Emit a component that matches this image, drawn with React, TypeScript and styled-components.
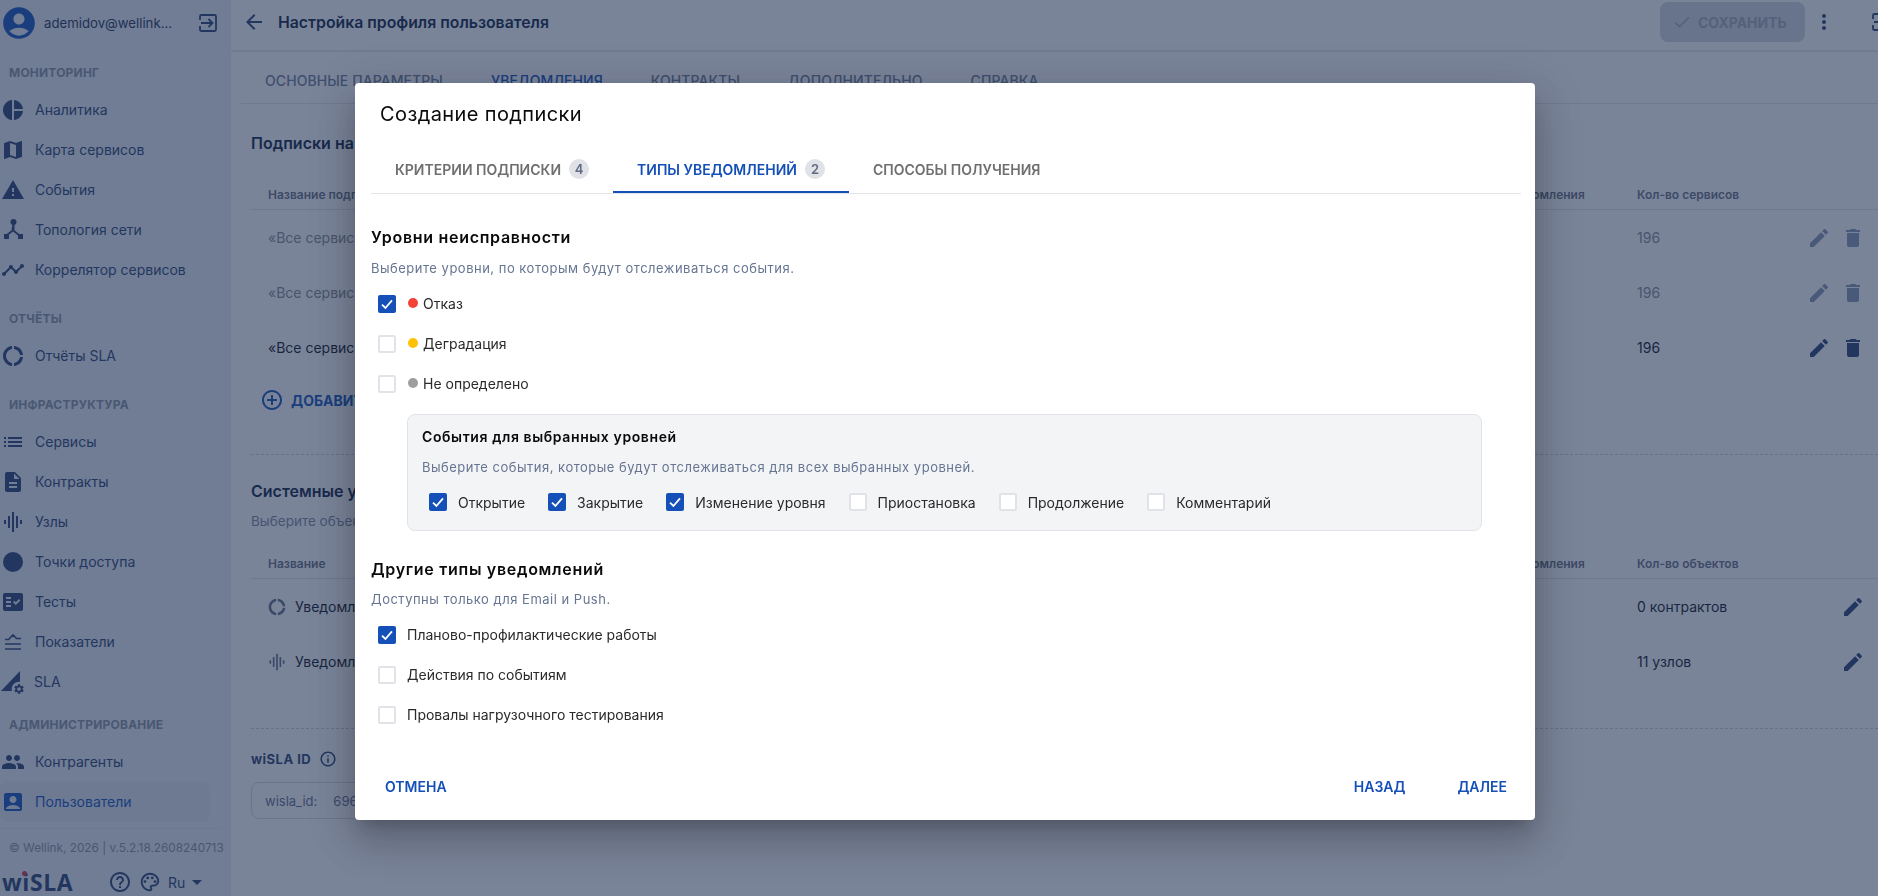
import React from "react";
import styled, { createGlobalStyle } from "styled-components";
import {
  MdAccountBox,
  MdAccountCircle,
  MdAddCircleOutline,
  MdArrowBack,
  MdArrowDropDown,
  MdCheck,
  MdDelete,
  MdDescription,
  MdDonutLarge,
  MdEdit,
  MdFactCheck,
  MdGraphicEq,
  MdHelpOutline,
  MdInfoOutline,
  MdList,
  MdMap,
  MdMoreVert,
  MdOutlinePalette,
  MdPeople,
  MdPieChart,
  MdTimeline,
  MdWarning,
} from "react-icons/md";

const GlobalStyle = createGlobalStyle`
  html, body {
    margin: 0;
    height: 100%;
    overflow: hidden;
    background: #fff;
  }
  * {
    box-sizing: border-box;
  }
  body {
    font-family: "Inter", "Liberation Sans", sans-serif;
    color: #000;
  }
`;

const Page = styled.div`
  display: flex;
  width: 1878px;
  height: 896px;
  overflow: hidden;
`;

const Sidebar = styled.aside`
  flex: none;
  width: 231px;
  height: 100%;
  background: #e9edf3;
  color: #253e6e;
`;

const UserRow = styled.div`
  display: flex;
  align-items: center;
  height: 46px;
  font-size: 13.2px;
`;

const UserName = styled.span`
  margin-left: 6px;
  width: 154px;
  white-space: nowrap;
  color: #1c2f55;
`;

const SectionLabel = styled.div<{ $gap?: number }>`
  height: 20px;
  line-height: 20px;
  margin: ${(p) => p.$gap ?? 19}px 0 7px;
  padding-left: 9px;
  font-size: 12px;
  font-weight: 700;
  letter-spacing: 0.2px;
  color: #878e9d;
`;

const NavItem = styled.div<{ $active?: boolean }>`
  display: flex;
  align-items: center;
  gap: 10px;
  width: 210px;
  height: 40px;
  padding: 0 0 1px 1px;
  font-size: 14px;
  border-radius: 8px;
  color: ${(p) => (p.$active ? "#0f52ba" : "#253e6e")};
  background: ${(p) => (p.$active ? "#dfe5ee" : "transparent")};
`;

const NavDot = styled.span`
  display: block;
  width: 20px;
  height: 20px;
  margin: 0 2px;
  border-radius: 50%;
  background: #253e6e;
`;

const SideDivider = styled.div`
  height: 1px;
  width: 222px;
  margin-top: 6px;
  background: #dfe3ea;
`;

const Copyright = styled.div`
  margin-top: 9px;
  padding-left: 9px;
  font-size: 11.8px;
  line-height: 20px;
  white-space: nowrap;
  color: #878e9d;
`;

const SideFooter = styled.div`
  display: flex;
  align-items: center;
  height: 30px;
  margin-top: 9px;
  padding-left: 2px;
`;

const Logo = styled.span`
  position: relative;
  width: 70px;
  font-family: "Open Sans", sans-serif;
  font-size: 23px;
  font-weight: 700;
  letter-spacing: 0.6px;
  line-height: 30px;
  color: #253e6e;
`;

const LogoDot = styled.i`
  position: absolute;
  left: 20px;
  top: 4px;
  width: 5px;
  height: 5px;
  border-radius: 50%;
  background: #d8303c;
`;

const LangLabel = styled.span`
  margin-left: 7px;
  font-size: 14px;
`;

const Main = styled.main`
  flex: 1;
  min-width: 0;
  height: 100%;
`;

const TopBar = styled.header`
  display: flex;
  align-items: center;
  height: 52px;
  padding: 0 0 6px 11px;
  border-bottom: 2px solid #e6e9ef;
`;

const PageTitle = styled.h1`
  flex: 1;
  margin: 0 0 0 12px;
  font-size: 15.8px;
  font-weight: 600;
  color: #0b1c40;
`;

const SaveButton = styled.div`
  display: flex;
  align-items: center;
  gap: 6px;
  width: 145px;
  height: 40px;
  padding-left: 12px;
  border-radius: 8px;
  background: #d2d7de;
  color: #a2a7b1;
  font-size: 14px;
  font-weight: 700;
`;

const CutIcon = styled.span`
  display: flex;
  flex: none;
  margin: 0 -13px 0 35px;
  color: #253e6e;
`;

const DotsIcon = styled.span`
  display: flex;
  margin-left: 7px;
`;

const PageTabs = styled.nav`
  display: flex;
  height: 52px;
  margin-left: 10px;
  padding: 21px 0 0 24px;
  gap: 48px;
  border-bottom: 1px solid #e2e5ec;
`;

const PageTab = styled.span<{ $active?: boolean }>`
  font-size: 14px;
  line-height: 16px;
  font-weight: 500;
  letter-spacing: 0.08px;
  color: ${(p) => (p.$active ? "#0f52ba" : "#6d7a93")};
`;

const Content = styled.div`
  padding-left: 20px;
`;

const Heading = styled.h2<{ $top: number }>`
  margin: ${(p) => p.$top}px 0 0;
  font-size: 16px;
  line-height: 20px;
  font-weight: 600;
  color: #0b1c40;
`;

const HeadRow = styled.div<{ $top: number }>`
  display: grid;
  grid-template-columns: 1201px 168px 1fr;
  align-items: center;
  height: 32px;
  margin-top: ${(p) => p.$top}px;
  padding: 1px 0 0 17px;
  border-bottom: 1px solid #dfe3ea;
  font-size: 12px;
  font-weight: 600;
  color: #666e80;
`;

const DataRow = styled.div<{ $dim?: boolean }>`
  display: grid;
  grid-template-columns: 1369px 1fr auto;
  align-items: center;
  height: 55px;
  padding: 0 13px 0 17px;
  font-size: 14px;
  color: ${(p) => (p.$dim ? "#85878f" : "#0b1220")};
`;

const RowName = styled.span`
  display: flex;
  align-items: center;
  gap: 8px;
  margin-left: -1px;
`;

const RowActions = styled.span<{ $dim?: boolean }>`
  display: flex;
  gap: 10px;
  color: #253e6e;
  opacity: ${(p) => (p.$dim ? 0.55 : 1)};
`;

const AddLink = styled.div`
  display: flex;
  align-items: center;
  gap: 7px;
  margin: 13px 0 0 9px;
  height: 24px;
  color: #0f52ba;
  font-size: 14px;
  font-weight: 700;
`;

const Dashed = styled.div<{ $top: number }>`
  margin-top: ${(p) => p.$top}px;
  border-top: 1px dashed #c9cfda;
`;

const Hint = styled.p`
  margin: 10px 0 0;
  font-size: 13.5px;
  line-height: 20px;
  color: #7d879b;
`;

const IdTitle = styled.div`
  display: flex;
  align-items: center;
  gap: 8px;
  height: 20px;
  margin-top: 20px;
  font-size: 13px;
  font-weight: 700;
  letter-spacing: 0.5px;
  color: #253e6e;
`;

const IdField = styled.div`
  display: flex;
  gap: 16px;
  align-items: center;
  width: 420px;
  height: 37px;
  margin-top: 13px;
  padding-left: 13px;
  border: 1px solid #d5dae3;
  border-radius: 8px;
  font-size: 13px;
  color: #5f6c85;
`;

const Scrim = styled.div`
  position: fixed;
  inset: 0;
  display: flex;
  align-items: center;
  justify-content: center;
  padding: 7px 0 0 12px;
  background: rgba(33, 50, 85, 0.6);
`;

const Modal = styled.section`
  display: flex;
  flex-direction: column;
  width: 1180px;
  height: 737px;
  border-radius: 4px;
  background: #fff;
  box-shadow: 0 11px 15px -7px rgba(0, 0, 0, 0.2), 0 24px 38px 3px rgba(0, 0, 0, 0.14),
    0 9px 46px 8px rgba(0, 0, 0, 0.12);
`;

const ModalTitle = styled.h2`
  margin: 19px 0 0 25px;
  font-size: 20px;
  line-height: 24px;
  font-weight: 400;
  letter-spacing: 0.4px;
  color: #0a0a0a;
`;

const ModalTabs = styled.div`
  display: flex;
  height: 47px;
  margin: 21px 14px 0 16px;
  border-bottom: 1px solid #e2e4e8;
`;

const ModalTab = styled.div<{ $active?: boolean }>`
  display: flex;
  align-items: center;
  gap: 8px;
  height: 46px;
  padding: 0 24px 2px;
  font-size: 14px;
  font-weight: 600;
  color: ${(p) => (p.$active ? "#1450b8" : "#6f6f6f")};
  box-shadow: ${(p) => (p.$active ? "inset 0 -2px 0 #1450b8" : "none")};
`;

const CountBadge = styled.span`
  display: flex;
  align-items: center;
  justify-content: center;
  width: 20px;
  height: 20px;
  border-radius: 50%;
  background: #e0e2e8;
  font-size: 13px;
  font-weight: 600;
  color: #5f6b80;
`;

const ModalBody = styled.div`
  padding-left: 16px;
`;

const GroupTitle = styled.h3<{ $top: number }>`
  margin: ${(p) => p.$top}px 0 0;
  font-size: 16px;
  line-height: 20px;
  font-weight: 600;
  letter-spacing: 0.7px;
  color: #0a0a0a;
`;

const GroupHint = styled.p<{ $top: number }>`
  margin: ${(p) => p.$top}px 0 0;
  font-size: 13px;
  line-height: 18px;
  letter-spacing: 0.5px;
  color: #667591;
`;

const CheckList = styled.div`
  margin-top: 6px;
  padding-left: 7px;
`;

const Box = styled.span<{ $checked?: boolean }>`
  flex: none;
  display: flex;
  align-items: center;
  justify-content: center;
  width: 18px;
  height: 18px;
  border-radius: 2px;
  border: ${(p) => (p.$checked ? "0" : "2px solid #e1e3e9")};
  background: ${(p) => (p.$checked ? "#1450b8" : "#fff")};
  margin-right: 11px;
`;

const CheckRow = styled.label`
  display: flex;
  align-items: center;
  height: 40px;
  font-size: 14px;
  color: #2a2a2a;

  ${Box} {
    margin-top: 2px;
  }
`;

const LevelDot = styled.span<{ $color: string }>`
  flex: none;
  width: 10px;
  height: 10px;
  margin-right: 5px;
  margin-left: 1px;
  border-radius: 50%;
  background: ${(p) => p.$color};
`;

const EventsPanel = styled.div`
  width: 1075px;
  height: 117px;
  margin: 11px 0 0 36px;
  padding: 13px 0 0 14px;
  border: 1px solid #e1e3e9;
  border-radius: 8px;
  background: #f3f4f6;
`;

const PanelTitle = styled.h4`
  margin: 0;
  font-size: 14px;
  line-height: 18px;
  font-weight: 600;
  letter-spacing: 0.6px;
  color: #0a0a0a;
`;

const EventsRow = styled.div`
  display: flex;
  align-items: center;
  gap: 23px;
  height: 24px;
  margin-top: 14px;
  padding-left: 7px;
`;

const EventItem = styled.label`
  display: flex;
  align-items: center;
  font-size: 14px;
  color: #2a2a2a;
`;

const ModalFooter = styled.footer`
  display: flex;
  align-items: center;
  gap: 52px;
  height: 68px;
  margin-top: auto;
  padding: 0 28px 0 30px;
`;

const FooterButton = styled.span<{ $push?: boolean }>`
  margin-right: ${(p) => (p.$push ? "auto" : "0")};
  font-size: 14px;
  font-weight: 600;
  color: #1450b8;
`;

const ExitIcon = () => (
  <svg width="20" height="20" viewBox="0 0 20 20" fill="none" stroke="currentColor" strokeWidth="1.8">
    <path d="M2 7V3.5A1.5 1.5 0 0 1 3.5 2h13A1.5 1.5 0 0 1 18 3.5v13a1.5 1.5 0 0 1-1.5 1.5h-13A1.5 1.5 0 0 1 2 16.5V13" />
    <path d="M3 10h11M10.5 6l4 4-4 4" />
  </svg>
);

const TopologyIcon = () => (
  <svg width="24" height="24" viewBox="0 0 24 24" fill="currentColor">
    <circle cx="12.5" cy="4" r="3" />
    <path d="M11.5 6h2v6.2l5 4-1.2 1.6-5.3-4.2-5.3 4.2-1.2-1.6 5-4z" />
    <rect x="3" y="16" width="5" height="5" />
    <rect x="17" y="16" width="5" height="5" />
  </svg>
);

const MetricsIcon = () => (
  <svg width="24" height="24" viewBox="0 0 24 24" fill="none" stroke="currentColor" strokeWidth="1.6">
    <path d="M4 9.5h3.5L12 5l3.5 3.5H20" />
    <path d="M4 14h16M4 19h16" />
  </svg>
);

const SlaIcon = () => (
  <svg width="26" height="26" viewBox="0 0 26 26" fill="currentColor" style={{ marginRight: -2, marginLeft: -1 }}>
    <path d="M1 22 L20 2 V13 A7 7 0 0 0 12 22 Z" />
    <svg x="13" y="14" width="12" height="12" viewBox="0 0 24 24">
      <path d="M19.14 12.94c.04-.3.06-.61.06-.94 0-.32-.02-.64-.07-.94l2.03-1.58c.18-.14.23-.41.12-.61l-1.92-3.32c-.12-.22-.37-.29-.59-.22l-2.39.96c-.5-.38-1.03-.7-1.62-.94l-.36-2.54c-.04-.24-.24-.41-.48-.41h-3.84c-.24 0-.43.17-.47.41l-.36 2.54c-.59.24-1.13.57-1.62.94l-2.39-.96c-.22-.08-.47 0-.59.22L2.74 8.87c-.12.21-.08.47.12.61l2.03 1.58c-.05.3-.09.63-.09.94s.02.64.07.94l-2.03 1.58c-.18.14-.23.41-.12.61l1.92 3.32c.12.22.37.29.59.22l2.39-.96c.5.38 1.03.7 1.62.94l.36 2.54c.05.24.24.41.48.41h3.84c.24 0 .44-.17.47-.41l.36-2.54c.59-.24 1.13-.56 1.62-.94l2.39.96c.22.08.47 0 .59-.22l1.92-3.32c.12-.22.07-.47-.12-.61l-2.01-1.58zM12 15.6c-1.98 0-3.6-1.62-3.6-3.6s1.62-3.6 3.6-3.6 3.6 1.62 3.6 3.6-1.62 3.6-3.6 3.6z" />
    </svg>
  </svg>
);

const Tick = () => (
  <svg width="14" height="14" viewBox="0 0 14 14" fill="none" stroke="#fff" strokeWidth="1.8">
    <path d="M2 7.6 5.4 11 12 3.4" />
  </svg>
);

const Check = ({ checked }: { checked?: boolean }) => <Box $checked={checked}>{checked ? <Tick /> : null}</Box>;

const levels = [
  { label: "Отказ", color: "#f44336", checked: true },
  { label: "Деградация", color: "#ffc107", checked: false },
  { label: "Не определено", color: "#9e9e9e", checked: false },
];

const events = [
  { label: "Открытие", checked: true },
  { label: "Закрытие", checked: true },
  { label: "Изменение уровня", checked: true },
  { label: "Приостановка", checked: false },
  { label: "Продолжение", checked: false },
  { label: "Комментарий", checked: false },
];

const others = [
  { label: "Планово-профилактические работы", checked: true },
  { label: "Действия по событиям", checked: false },
  { label: "Провалы нагрузочного тестирования", checked: false },
];

export default function App() {
  return (
    <>
      <GlobalStyle />
      <Page>
        <Sidebar>
          <UserRow>
            <MdAccountCircle size={38} color="#0f52ba" />
            <UserName>ademidov@wellink...</UserName>
            <ExitIcon />
          </UserRow>

          <SectionLabel $gap={17}>МОНИТОРИНГ</SectionLabel>
          <NavItem><MdPieChart size={24} />Аналитика</NavItem>
          <NavItem><MdMap size={24} />Карта сервисов</NavItem>
          <NavItem><MdWarning size={24} />События</NavItem>
          <NavItem><TopologyIcon />Топология сети</NavItem>
          <NavItem><MdTimeline size={24} />Коррелятор сервисов</NavItem>

          <SectionLabel>ОТЧЁТЫ</SectionLabel>
          <NavItem><MdDonutLarge size={24} />Отчёты SLA</NavItem>

          <SectionLabel>ИНФРАСТРУКТУРА</SectionLabel>
          <NavItem><MdList size={24} />Сервисы</NavItem>
          <NavItem><MdDescription size={24} />Контракты</NavItem>
          <NavItem><MdGraphicEq size={24} />Узлы</NavItem>
          <NavItem><NavDot />Точки доступа</NavItem>
          <NavItem><MdFactCheck size={24} />Тесты</NavItem>
          <NavItem><MetricsIcon />Показатели</NavItem>
          <NavItem><SlaIcon />SLA</NavItem>

          <SectionLabel $gap={13}>АДМИНИСТРИРОВАНИЕ</SectionLabel>
          <NavItem><MdPeople size={24} />Контрагенты</NavItem>
          <NavItem $active><MdAccountBox size={24} />Пользователи</NavItem>

          <SideDivider />
          <Copyright>© Wellink, 2026 | v.5.2.18.2608240713</Copyright>
          <SideFooter>
            <Logo>wiSLA<LogoDot /></Logo>
            <MdHelpOutline size={24} style={{ marginLeft: 36 }} />
            <MdOutlinePalette size={22} style={{ marginLeft: 7 }} />
            <LangLabel>Ru</LangLabel>
            <MdArrowDropDown size={24} />
          </SideFooter>
        </Sidebar>

        <Main>
          <TopBar>
            <MdArrowBack size={24} color="#253e6e" />
            <PageTitle>Настройка профиля пользователя</PageTitle>
            <SaveButton><MdCheck size={20} />СОХРАНИТЬ</SaveButton>
            <DotsIcon><MdMoreVert size={24} color="#253e6e" /></DotsIcon>
            <CutIcon><ExitIcon /></CutIcon>
          </TopBar>

          <PageTabs>
            <PageTab>ОСНОВНЫЕ ПАРАМЕТРЫ</PageTab>
            <PageTab $active>УВЕДОМЛЕНИЯ</PageTab>
            <PageTab>КОНТРАКТЫ</PageTab>
            <PageTab>ДОПОЛНИТЕЛЬНО</PageTab>
            <PageTab>СПРАВКА</PageTab>
          </PageTabs>

          <Content>
            <Heading $top={29}>Подписки на события</Heading>
            <HeadRow $top={25}>
              <span>Название подписки</span>
              <span>Типы уведомления</span>
              <span>Кол-во сервисов</span>
            </HeadRow>
            <DataRow $dim>
              <span>«Все сервисы»</span><span>196</span>
              <RowActions $dim><MdEdit size={24} /><MdDelete size={24} /></RowActions>
            </DataRow>
            <DataRow $dim>
              <span>«Все сервисы»</span><span>196</span>
              <RowActions $dim><MdEdit size={24} /><MdDelete size={24} /></RowActions>
            </DataRow>
            <DataRow>
              <span>«Все сервисы»</span><span>196</span>
              <RowActions><MdEdit size={24} /><MdDelete size={24} /></RowActions>
            </DataRow>
            <AddLink><MdAddCircleOutline size={24} />ДОБАВИТЬ</AddLink>
            <Dashed $top={42} />

            <Heading $top={26}>Системные уведомления</Heading>
            <Hint>Выберите объекты</Hint>
            <HeadRow $top={16}>
              <span>Название</span>
              <span>Типы уведомления</span>
              <span>Кол-во объектов</span>
            </HeadRow>
            <DataRow>
              <RowName><MdDonutLarge size={20} color="#5f6c85" />Уведомления</RowName>
              <span>0 контрактов</span>
              <RowActions><MdEdit size={24} /></RowActions>
            </DataRow>
            <DataRow>
              <RowName><MdGraphicEq size={20} color="#5f6c85" />Уведомления</RowName>
              <span>11 узлов</span>
              <RowActions><MdEdit size={24} /></RowActions>
            </DataRow>
            <Dashed $top={39} />

            <IdTitle>wiSLA ID<MdInfoOutline size={18} /></IdTitle>
            <IdField><span>wisla_id:</span><span>696</span></IdField>
          </Content>
        </Main>
      </Page>

      <Scrim>
        <Modal>
          <ModalTitle>Создание подписки</ModalTitle>
          <ModalTabs>
            <ModalTab>КРИТЕРИИ ПОДПИСКИ<CountBadge>4</CountBadge></ModalTab>
            <ModalTab $active>ТИПЫ УВЕДОМЛЕНИЙ<CountBadge>2</CountBadge></ModalTab>
            <ModalTab>СПОСОБЫ ПОЛУЧЕНИЯ</ModalTab>
          </ModalTabs>

          <ModalBody>
            <GroupTitle $top={33}>Уровни неисправности</GroupTitle>
            <GroupHint $top={12}>Выберите уровни, по которым будут отслеживаться события.</GroupHint>
            <CheckList>
              {levels.map((l) => (
                <CheckRow key={l.label}>
                  <Check checked={l.checked} />
                  <LevelDot $color={l.color} />
                  {l.label}
                </CheckRow>
              ))}
            </CheckList>

            <EventsPanel>
              <PanelTitle>События для выбранных уровней</PanelTitle>
              <GroupHint $top={12}>Выберите события, которые будут отслеживаться для всех выбранных уровней.</GroupHint>
              <EventsRow>
                {events.map((e) => (
                  <EventItem key={e.label}>
                    <Check checked={e.checked} />
                    {e.label}
                  </EventItem>
                ))}
              </EventsRow>
            </EventsPanel>

            <GroupTitle $top={28}>Другие типы уведомлений</GroupTitle>
            <GroupHint $top={11}>Доступны только для Email и Push.</GroupHint>
            <CheckList>
              {others.map((o) => (
                <CheckRow key={o.label}>
                  <Check checked={o.checked} />
                  {o.label}
                </CheckRow>
              ))}
            </CheckList>
          </ModalBody>

          <ModalFooter>
            <FooterButton $push>ОТМЕНА</FooterButton>
            <FooterButton>НАЗАД</FooterButton>
            <FooterButton>ДАЛЕЕ</FooterButton>
          </ModalFooter>
        </Modal>
      </Scrim>
    </>
  );
}
